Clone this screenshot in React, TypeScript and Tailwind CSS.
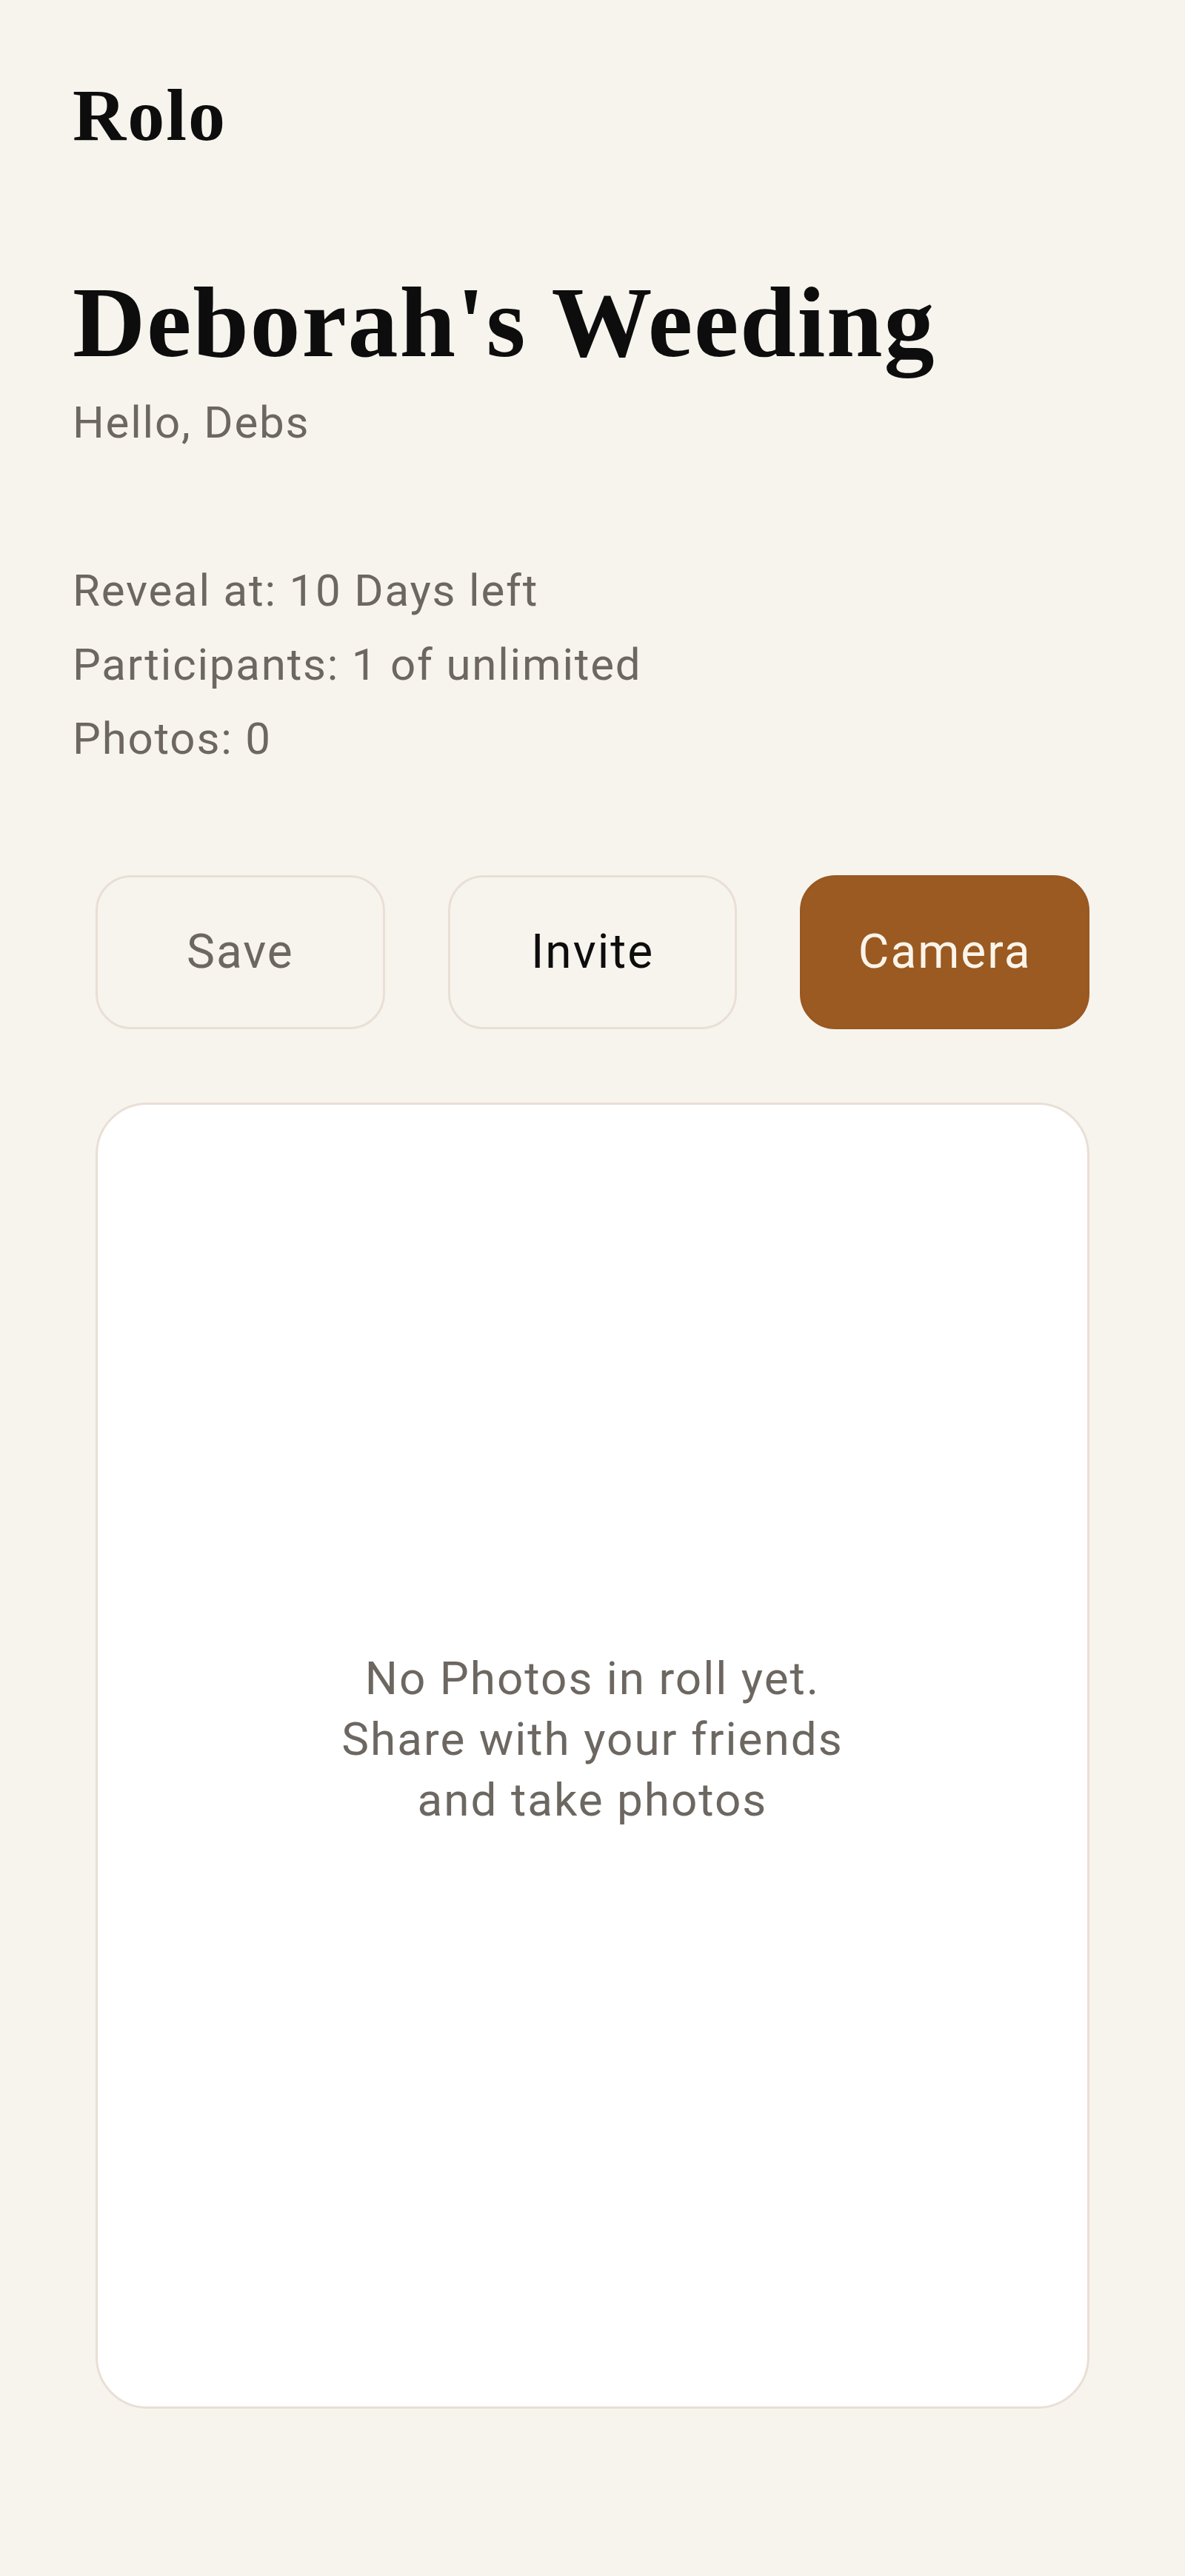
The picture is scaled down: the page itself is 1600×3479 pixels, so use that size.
import React from 'react';

const serif = "font-['Liberation_Serif',Georgia,serif]";
const sans = "font-['Roboto','Liberation_Sans',Arial,sans-serif]";

const stats = ['Reveal at: 10 Days left', 'Participants: 1 of unlimited', 'Photos: 0'];

const App: React.FC = () => {
  return (
    <div className={`min-h-screen w-full bg-[#f7f4ee] ${sans}`}>
      <div className="px-[98px] pt-[106px] pb-[225px]">
        {/* Brand */}
        <div className={`${serif} text-[100px] font-bold leading-none tracking-[2px] text-[#0d0d0d]`}>Rolo</div>

        {/* Event heading */}
        <h1 className={`${serif} mt-[161px] text-[136px] font-bold leading-none tracking-[1.8px] text-[#0d0d0d]`}>
          Deborah's Weeding
        </h1>
        <p className="mt-[38px] text-[60px] leading-[60px] tracking-[1.8px] text-[#6d6761]">Hello, Debs</p>

        {/* Stats */}
        <div className="mt-[147px] text-[60px] leading-[100px] tracking-[1.8px] text-[#6d6761]">
          {stats.map((s) => (
            <div key={s}>{s}</div>
          ))}
        </div>

        <div className="px-[31px]">
          {/* Actions */}
          <div className="mt-[134px] grid grid-cols-3 gap-[85px] text-[64px] tracking-[2px]">
            <button className="h-[208px] rounded-[48px] border-[3px] border-[#e9dfd5] bg-[#f7f4ee] text-[#6d6761]">
              Save
            </button>
            <button className="h-[208px] rounded-[48px] border-[3px] border-[#e9dfd5] bg-[#f7f4ee] text-[#0d0d0d]">
              Invite
            </button>
            <button className="h-[208px] rounded-[48px] border-[3px] border-[#9a5821] bg-[#9b5a21] text-[#fbf4ea]">
              Camera
            </button>
          </div>

          {/* Photo roll */}
          <div className="mt-[99px] flex h-[1764px] items-center justify-center rounded-[70px] border-[3px] border-[#e9dfd5] bg-white pb-[44px]">
            <p className="text-center text-[62px] leading-[82px] tracking-[2px] text-[#6d6761]">
              No Photos in roll yet.
              <br />
              Share with your friends
              <br />
              and take photos
            </p>
          </div>
        </div>
      </div>
    </div>
  );
};

export default App;
